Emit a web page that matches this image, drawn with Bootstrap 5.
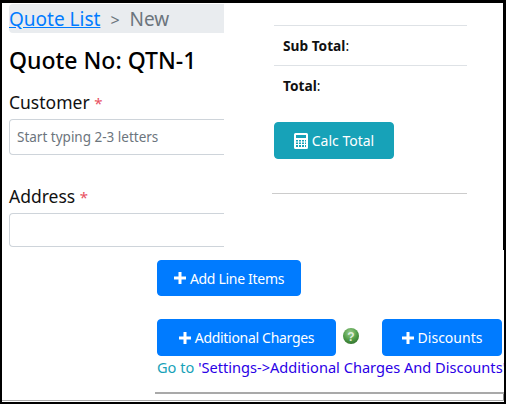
<!DOCTYPE html>
<html lang="en">

<head>
    <meta charset="UTF-8">
    <meta name="viewport" content="width=device-width, initial-scale=1.0">
    <title>New Quote</title>
    <link href="https://cdn.jsdelivr.net/npm/bootstrap@5.3.0/dist/css/bootstrap.min.css" rel="stylesheet">

<style>
        html, body {
            margin: 0;
            overflow: hidden;
            background: #fff;
        }

        body {
            font-family: "Noto Sans", "Open Sans", sans-serif;
            color: #111;
        }

        /* Black Frame Around The Capture */
        .shot-frame {
            width: 506px;
            height: 404px;
            border-style: solid;
            border-color: #000;
            border-width: 3px 2px 2px 2px;
            overflow: hidden;
        }

        .top-part {
            height: 247px;
            border-right: 1px solid #000;
        }

        /* Left Half */
        .left-part {
            width: 222px;
            flex: none;
            padding: 1px 0 0 7px;
        }

        .crumb-bar {
            height: 29px;
            background: #e9ecef;
            border-radius: 4px 0 0 4px;
            font-size: 19px;
            line-height: 31px;
            color: #6c757d;
            white-space: nowrap;
        }

        .crumb-bar a {
            color: #007bff;
        }

        .crumb-sep {
            margin: 0 10px 0 10px;
            font-size: 16px;
        }

        .quote-no {
            font-size: 23px;
            font-weight: 500;
            line-height: 28px;
            margin: 13px 0 16px;
            color: #000;
            white-space: nowrap;
        }

        .field-label {
            font-size: 17.5px;
            line-height: 24px;
            margin-bottom: 0;
        }

        .req-star {
            color: #e8505f;
            font-size: 15px;
        }

        .field-box {
            height: 36px;
            border: 1px solid #ced4da;
            border-right: 0;
            border-radius: 4px 0 0 4px;
            font-size: 13.5px;
            line-height: 34px;
            padding-left: 7px;
            color: #6c757d;
            white-space: nowrap;
        }

        .customer-box {
            margin: 4px 0 29px;
        }

        .address-box {
            height: 34px;
            margin-top: 4px;
        }

        /* Right Half */
        .right-part {
            padding: 22px 0 0 50px;
            width: 243px;
            flex: none;
        }

        .total-row {
            border-top: 1px solid #dee2e6;
            height: 40px;
            line-height: 40px;
            padding-left: 9px;
            font-size: 13.7px;
        }

        .total-row b {
            font-weight: 700;
        }

        .calc-btn {
            width: 120px;
            height: 37px;
            margin-top: 17px;
            padding: 0;
            font-size: 14px;
            color: #fff;
            background: #17a2b8;
            border-color: #17a2b8;
            border-radius: 4px;
        }

        .right-rule {
            height: 1px;
            background: #ccc;
            margin: 34px 0 0 -2px;
        }

        /* Lower Part */
        .bottom-part {
            height: 151px;
            padding: 10px 0 0 155px;
            border-bottom: 1px solid #aaa;
        }

        .add-btn {
            height: 36px;
            padding: 0;
            font-size: 14px;
            color: #fff;
            background: #007bff;
            border-color: #007bff;
            border-radius: 4px;
            white-space: nowrap;
        }

        .line-btn { width: 144px; letter-spacing: -0.3px; }
        .charge-btn { width: 179px; height: 37px; letter-spacing: -0.3px; }
        .discount-btn { width: 120px; height: 37px; }

        .charge-row {
            margin-top: 23px;
        }

        .help-dot {
            width: 16px;
            height: 16px;
            margin: 0 23px 4px 7px;
            flex: none;
        }

        .goto-line {
            font-size: 14.6px;
            line-height: 18px;
            color: #17a2b8;
            white-space: nowrap;
            margin-top: 2px;
        }

        .goto-line a {
            color: #2a00e6;
            text-decoration: none;
        }

        .bottom-rule {
            height: 2px;
            background: #a9a9a9;
            margin: 16px 0 0 -2px;
        }

        .tail-box {
            height: 6px;
            border-right: 1px solid #888;
        }
</style>
</head>

<body>

    <div class="shot-frame">

        <!-- Form And Totals -->
        <div class="top-part d-flex">
            <div class="left-part">
                <div class="crumb-bar"><a href="#">Quote List</a><span class="crumb-sep">&gt;</span>New</div>
                <h1 class="quote-no">Quote No: QTN-1</h1>
                <label class="field-label d-block">Customer <span class="req-star">*</span></label>
                <div class="field-box customer-box">Start typing 2-3 letters</div>
                <label class="field-label d-block">Address <span class="req-star">*</span></label>
                <div class="field-box address-box"></div>
            </div>
            <div class="right-part">
                <div class="total-row"><b>Sub Total</b>:</div>
                <div class="total-row"><b>Total</b>:</div>
                <button type="button" class="btn calc-btn d-flex align-items-center justify-content-center gap-1">
                    <svg width="14" height="16" viewBox="0 0 14 16"><path fill="#fff" fill-rule="evenodd" d="M1.5 0h11A1.5 1.5 0 0 1 14 1.500v13a1.500 1.500 0 0 1-1.500 1.500h-11A1.500 1.500 0 0 1 0 14.500v-13A1.500 1.500 0 0 1 1.500 0zM2 2v3h10V2zM2 7v1.500h2V7zm3 0v1.500h2V7zm3 0v1.500h2V7zm3 0v1.500h1V7zM2 9.500V11h2V9.500zm3 0V11h2V9.500zm3 0V11h2V9.500zm3 0V11h1V9.500zM2 12v2h2v-2zm3 0v2h2v-2zm3 0v2h2v-2zm3 0v2h1v-2z"/></svg>
                    Calc Total
                </button>
                <div class="right-rule"></div>
            </div>
        </div>

        <!-- Line Items And Charges -->
        <div class="bottom-part">
            <button type="button" class="btn add-btn line-btn d-flex align-items-center justify-content-center gap-1">
                <svg width="12" height="12" viewBox="0 0 12 12"><path fill="#fff" d="M4.500 0h3v4.500H12v3H7.500V12h-3V7.500H0v-3h4.500z"/></svg>
                Add Line Items
            </button>
            <div class="charge-row d-flex align-items-center">
                <button type="button" class="btn add-btn charge-btn d-flex align-items-center justify-content-center gap-1">
                    <svg width="12" height="12" viewBox="0 0 12 12"><path fill="#fff" d="M4.500 0h3v4.500H12v3H7.500V12h-3V7.500H0v-3h4.500z"/></svg>
                    Additional Charges
                </button>
                <svg class="help-dot" viewBox="0 0 16 16">
                    <defs>
                        <radialGradient id="helpShade" cx="45%" cy="30%" r="75%">
                            <stop offset="0" stop-color="#9ccf8e"/>
                            <stop offset="0.6" stop-color="#4f9a45"/>
                            <stop offset="1" stop-color="#2f6f2c"/>
                        </radialGradient>
                    </defs>
                    <circle cx="8" cy="8" r="8" fill="url(#helpShade)"/>
                    <text x="8" y="12.500" text-anchor="middle" font-size="12" font-weight="700" font-family="Liberation Sans, sans-serif" fill="#dfeedd">?</text>
                </svg>
                <button type="button" class="btn add-btn discount-btn d-flex align-items-center justify-content-center gap-1">
                    <svg width="12" height="12" viewBox="0 0 12 12"><path fill="#fff" d="M4.500 0h3v4.500H12v3H7.500V12h-3V7.500H0v-3h4.500z"/></svg>
                    Discounts
                </button>
            </div>
            <div class="goto-line">Go to <a href="#">'Settings-&gt;Additional Charges And Discounts'</a></div>
            <div class="bottom-rule"></div>
            <div class="tail-box"></div>
        </div>
    </div>

</body>

</html>
